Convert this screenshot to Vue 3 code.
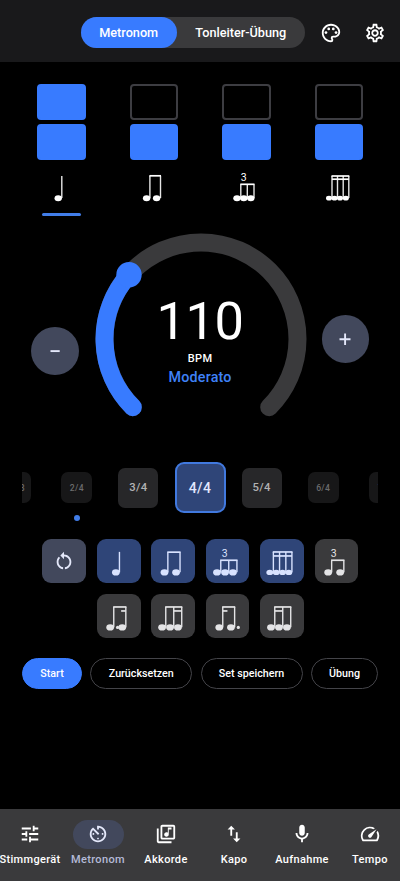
<script setup>
const note = (heads, stems, top, extra = {}) => ({ heads, stems, top, beams: [], ...extra })

const beats = [
  { levels: [true, true], current: true, note: note([19.2], [22.8], 6) },
  { levels: [false, true], note: note([14.6, 24.6], [17.9, 28.5], 5.8) },
  { levels: [false, true], note: note([13, 19.8, 26.8], [16.8, 23.3, 30], 14.3, { triplet: [19.8, 11.4] }) },
  { levels: [false, true], note: note([12, 17.5, 23, 28.8], [15, 20.5, 26.2, 31.8], 6, { beams: [[15, 31.8, 9.2]] }) },
]

const signatures = [
  { label: '12/8', size: 'small' },
  { label: '2/4', size: 'small', dot: true },
  { label: '3/4', size: 'medium' },
  { label: '4/4', size: 'large' },
  { label: '5/4', size: 'medium' },
  { label: '6/4', size: 'small' },
  { label: '7/4', size: 'small' },
]

const patterns = [
  { kind: 'reset' },
  { kind: 'active', note: note([18.9], [22.5], 12.9) },
  { kind: 'active', note: note([13.5, 25.1], [16.9, 29.1], 13.2) },
  { kind: 'active', note: note([11, 19.1, 27], [14.8, 22.8, 31], 21.3, { triplet: [18.8, 18.2] }) },
  { kind: 'active', note: note([9.8, 16.3, 22.6, 28.9], [13.4, 19.6, 25.9, 32], 13, { beams: [[13.4, 32, 17]] }) },
  { kind: 'plain', note: note([13.2, 25.2], [16.7, 28.9], 21.3, { triplet: [18.8, 18.2] }) },
  { kind: 'plain', note: note([13.2, 25.3], [16.8, 28.9], 13, { beams: [[24.2, 28.9, 17]], dot: 20.6 }) },
  { kind: 'plain', note: note([11.1, 19.1, 27], [14.8, 22.8, 30.8], 13, { beams: [[22.8, 30.8, 17]] }) },
  { kind: 'plain', note: note([13.3, 25], [16.8, 28.7], 13, { beams: [[16.8, 21.5, 17]], dot: 32.4 }) },
  { kind: 'plain', note: note([11, 19, 27], [14.8, 22.8, 30.8], 13, { beams: [[14.8, 22.8, 17]] }) },
]

const tabs = [
  { label: 'Stimmgerät', d: 'M3 17v2h6v-2H3zM3 5v2h10V5H3zm10 16v-2h8v-2h-8v-2h-2v6h2zM7 9v2H3v2h4v2h2V9H7zm14 4v-2H11v2h10zm-6-4h2V7h4V5h-4V3h-2v6z' },
  { label: 'Metronom', active: true, d: 'M11 17c0 .55.45 1 1 1s1-.45 1-1-.45-1-1-1-1 .45-1 1zm0-14v4h2V5.08c3.39.49 6 3.39 6 6.92 0 3.87-3.13 7-7 7s-7-3.13-7-7c0-1.68.59-3.22 1.58-4.42L12 13l1.41-1.41-6.8-6.8v.02C4.42 6.45 3 9.05 3 12c0 4.97 4.02 9 9 9 4.97 0 9-4.03 9-9s-4.03-9-9-9h-1zm7 9c0-.55-.45-1-1-1s-1 .45-1 1 .45 1 1 1 1-.45 1-1zM6 12c0 .55.45 1 1 1s1-.45 1-1-.45-1-1-1-1 .45-1 1z' },
  { label: 'Akkorde', d: 'M20 2H8c-1.1 0-2 .9-2 2v12c0 1.1.9 2 2 2h12c1.1 0 2-.9 2-2V4c0-1.1-.9-2-2-2zm0 14H8V4h12v12zm-7.5-1c1.38 0 2.5-1.12 2.5-2.5V7h3V5h-4v5.51c-.42-.32-.93-.51-1.5-.51-1.38 0-2.5 1.12-2.5 2.5s1.12 2.5 2.5 2.5zM4 6H2v14c0 1.1.9 2 2 2h14v-2H4V6z' },
  { label: 'Kapo', d: 'M16 17.01V10h-2v7.01h-3L15 21l4-3.99h-3zM9 3L5 6.99h3V14h2V6.99h3L9 3z' },
  { label: 'Aufnahme', d: 'M12 14c1.66 0 3-1.34 3-3V5c0-1.66-1.34-3-3-3S9 3.34 9 5v6c0 1.66 1.34 3 3 3zm5-3c0 2.76-2.24 5-5 5s-5-2.24-5-5H5c0 3.53 2.61 6.43 6 6.92V21h2v-3.08c3.39-.49 6-3.39 6-6.92h-2z' },
  { label: 'Tempo', d: 'M20.38 8.57l-1.23 1.85a8 8 0 0 1-.22 7.58H5.07A8 8 0 0 1 15.58 6.85l1.85-1.23A10 10 0 0 0 3.35 19a2 2 0 0 0 1.72 1h13.85a2 2 0 0 0 1.74-1 10 10 0 0 0-.27-10.44zM10.59 15.41a2 2 0 0 0 2.83 0l5.66-8.49-8.49 5.66a2 2 0 0 0 0 2.83z' },
]
</script>

<template>
  <div class="app">
    <header class="topbar">
      <div class="switch">
        <button class="seg seg-on">Metronom</button>
        <button class="seg">Tonleiter-Übung</button>
      </div>
      <svg class="icon palette" viewBox="0 0 24 24">
        <path d="M12 22C6.49 22 2 17.51 2 12S6.49 2 12 2s10 4.04 10 9c0 3.31-2.69 6-6 6h-1.77c-.28 0-.5.22-.5.5 0 .12.05.23.13.33.41.47.64 1.06.64 1.67A2.5 2.5 0 0 1 12 22zm0-18c-4.41 0-8 3.59-8 8s3.59 8 8 8c.28 0 .5-.22.5-.5a.54.54 0 0 0-.14-.35c-.41-.46-.63-1.05-.63-1.65a2.5 2.5 0 0 1 2.5-2.5H16c2.21 0 4-1.79 4-4 0-3.86-3.59-7-8-7z" />
        <circle cx="6.5" cy="11.5" r="1.5" /><circle cx="9.5" cy="7.5" r="1.5" />
        <circle cx="14.5" cy="7.5" r="1.5" /><circle cx="17.5" cy="11.5" r="1.5" />
      </svg>
      <svg class="icon" viewBox="0 0 24 24">
        <path d="M19.43 12.98c.04-.32.07-.64.07-.98 0-.34-.03-.66-.07-.98l2.11-1.65c.19-.15.24-.42.12-.64l-2-3.46c-.09-.16-.26-.25-.44-.25-.06 0-.12.01-.17.03l-2.49 1c-.52-.4-1.08-.73-1.69-.98l-.38-2.65C14.46 2.18 14.25 2 14 2h-4c-.25 0-.46.18-.49.42l-.38 2.65c-.61.25-1.17.59-1.69.98l-2.49-1c-.06-.02-.12-.03-.18-.03-.17 0-.34.09-.43.25l-2 3.46c-.13.22-.07.49.12.64l2.11 1.65c-.04.32-.07.65-.07.98 0 .33.03.66.07.98l-2.11 1.65c-.19.15-.24.42-.12.64l2 3.46c.09.16.26.25.44.25.06 0 .12-.01.17-.03l2.49-1c.52.4 1.08.73 1.69.98l.38 2.65c.03.24.24.42.49.42h4c.25 0 .46-.18.49-.42l.38-2.65c.61-.25 1.17-.59 1.69-.98l2.49 1c.06.02.12.03.18.03.17 0 .34-.09.43-.25l2-3.46c.12-.22.07-.49-.12-.64l-2.11-1.65zm-1.98-1.71c.04.31.05.52.05.73 0 .21-.02.43-.05.73l-.14 1.13.89.7 1.08.84-.7 1.21-1.27-.51-1.04-.42-.9.68c-.43.32-.84.56-1.25.73l-1.06.43-.16 1.13-.2 1.35h-1.4l-.19-1.35-.16-1.13-1.06-.43c-.43-.18-.83-.41-1.23-.71l-.91-.7-1.06.43-1.27.51-.7-1.21 1.08-.84.89-.7-.14-1.13c-.03-.31-.05-.54-.05-.74s.02-.43.05-.73l.14-1.13-.89-.7-1.08-.84.7-1.21 1.27.51 1.04.42.9-.68c.43-.32.84-.56 1.25-.73l1.06-.43.16-1.13.2-1.35h1.39l.19 1.35.16 1.13 1.06.43c.43.18.83.41 1.23.71l.91.7 1.06-.43 1.27-.51.7 1.21-1.07.85-.89.7.14 1.13zM12 8c-2.21 0-4 1.79-4 4s1.79 4 4 4 4-1.79 4-4-1.79-4-4-4zm0 6c-1.1 0-2-.9-2-2s.9-2 2-2 2 .9 2 2-.9 2-2 2z" />
      </svg>
    </header>

    <main class="main">
      <section class="beats">
        <div v-for="(b, i) in beats" :key="i" class="beat">
          <div v-for="(on, j) in b.levels" :key="j" class="level" :class="{ filled: on }"></div>
          <svg class="beat-note" viewBox="0 0 44 36">
            <path v-for="s in b.note.stems" :key="s" class="stem" :d="`M${s} ${b.note.top}V28`" />
            <path v-if="b.note.stems.length > 1" class="beam" :d="`M${b.note.stems[0] - 0.5} ${b.note.top}H${b.note.stems.at(-1) + 0.5}`" />
            <path v-for="(m, k) in b.note.beams" :key="'m' + k" class="beam" :d="`M${m[0]} ${m[2]}H${m[1]}`" />
            <ellipse v-for="h in b.note.heads" :key="'h' + h" :cx="h" cy="28.2" :rx="b.note.heads.length > 3 ? 3 : 3.7" :ry="b.note.heads.length > 3 ? 2.4 : 3" />
            <text v-if="b.note.triplet" :x="b.note.triplet[0]" :y="b.note.triplet[1]">3</text>
          </svg>
          <div class="marker" :class="{ shown: b.current }"></div>
        </div>
      </section>

      <section class="tempo">
        <button class="round minus" aria-label="minus">
          <svg viewBox="0 0 24 24"><path d="M7.5 12.1H16.7" /></svg>
        </button>
        <div class="dial">
          <svg class="arc" viewBox="0 0 212 186">
            <path class="track" d="M37.8 174.2A96.5 96.5 0 1 1 174.2 174.2" />
            <path class="value" d="M37.8 174.2A96.5 96.5 0 0 1 34 41.7" />
            <circle cx="34" cy="41.7" r="12.7" />
          </svg>
          <div class="readout">
            <div class="bpm">110</div>
            <div class="unit">BPM</div>
            <div class="name">Moderato</div>
          </div>
        </div>
        <button class="round plus" aria-label="plus">
          <svg viewBox="0 0 24 24"><path d="M6.5 12.2H17.5M12.1 6.4V18" /></svg>
        </button>
      </section>

      <section class="signatures">
        <div v-for="s in signatures" :key="s.label" class="cell">
          <div class="sig" :class="s.size">{{ s.label }}</div>
          <i v-if="s.dot" class="sig-dot"></i>
        </div>
      </section>

      <section class="patterns">
        <button v-for="(p, i) in patterns" :key="i" class="pattern" :class="p.kind">
          <svg v-if="p.kind === 'reset'" class="reset-icon" viewBox="0 0 24 24">
            <path d="M12 5V2L8 6l4 4V7c3.31 0 6 2.69 6 6 0 2.97-2.17 5.43-5 5.91v2.02c3.95-.49 7-3.85 7-7.93 0-4.42-3.58-8-8-8zM6 13c0-1.65.67-3.15 1.76-4.24L6.34 7.34C4.9 8.79 4 10.79 4 13c0 4.08 3.05 7.44 7 7.93v-2.02c-2.83-.48-5-2.94-5-5.91z" />
          </svg>
          <svg v-else class="pattern-note" viewBox="0 0 44 44">
            <path v-for="s in p.note.stems" :key="s" class="stem" :d="`M${s} ${p.note.top}V33.4`" />
            <path v-if="p.note.stems.length > 1" class="beam" :d="`M${p.note.stems[0] - 0.6} ${p.note.top}H${p.note.stems.at(-1) + 0.6}`" />
            <path v-for="(m, k) in p.note.beams" :key="'m' + k" class="beam" :d="`M${m[0]} ${m[2]}H${m[1]}`" />
            <ellipse v-for="h in p.note.heads" :key="'h' + h" :cx="h" cy="33.5" :rx="p.note.heads.length > 3 ? 3.4 : 3.9" :ry="p.note.heads.length > 3 ? 2.7 : 3.1" />
            <circle v-if="p.note.dot" :cx="p.note.dot" cy="33.5" r="1.6" />
            <text v-if="p.note.triplet" :x="p.note.triplet[0]" :y="p.note.triplet[1]">3</text>
          </svg>
        </button>
      </section>

      <section class="actions">
        <button class="act primary">Start</button>
        <button class="act wide">Zurücksetzen</button>
        <button class="act wide">Set speichern</button>
        <button class="act last">Übung</button>
      </section>
    </main>

    <nav class="tabs">
      <a v-for="t in tabs" :key="t.label" class="tab" :class="{ on: t.active }">
        <span class="tab-pill"><svg class="icon" viewBox="0 0 24 24"><path :d="t.d" /></svg></span>
        <span class="tab-label">{{ t.label }}</span>
      </a>
    </nav>
  </div>
</template>

<style>
body { background: #000; }
</style>

<style scoped>
* { box-sizing: border-box; }
.app {
  width: 400px; height: 881px; overflow: hidden;
  display: flex; flex-direction: column;
  background: #000; color: #fff;
  font-family: Roboto, "Noto Sans", sans-serif;
}
button { font: inherit; color: inherit; border: 0; padding: 0; background: none; }
svg { display: block; flex: none; }
.icon { width: 22px; height: 22px; fill: #fff; }

.topbar {
  height: 62px; flex: none; background: #19191b;
  display: flex; align-items: center; justify-content: flex-end;
  padding: 3px 14px 0 0;
}
.switch {
  display: flex; width: 224.3px; height: 31px; margin-right: 15px;
  border-radius: 16px; background: #3a3a3c;
}
.seg { flex: 1; font-size: 12.7px; font-weight: 500; border-radius: 16px; white-space: nowrap; }
.seg-on { flex: 0 0 96px; background: #387bff; }
.palette { margin-right: 22px; }

.main { flex: 1; padding-top: 21.7px; }
.beats { display: grid; grid-template-columns: repeat(4, 92.5px); justify-content: center; }
.beat { display: flex; flex-direction: column; align-items: center; }
.level {
  width: 48.5px; height: 36.3px; margin-bottom: 3.7px; border-radius: 4px;
  border: 2px solid #3d3d42;
}
.level.filled { background: #387bff; border-color: #387bff; }
.beat-note { width: 44px; height: 36px; margin-top: 6.3px; fill: #fff; stroke: none; }
.stem { stroke: #e6e6e6; stroke-width: 1.4; fill: none; }
.beam { stroke: #fff; stroke-width: 1.7; fill: none; }
text { font-size: 10.5px; text-anchor: middle; }
.marker { width: 39.5px; height: 3px; margin-top: 6.6px; border-radius: 2px; }
.marker.shown { background: #417de8; }

.tempo { display: flex; margin-top: 15.3px; padding-left: 31.2px; height: 188px; }
.round {
  width: 47.8px; height: 47.8px; flex: none; border-radius: 50%; background: #42485c;
  display: flex; align-items: center; justify-content: center;
}
.round svg { width: 24px; height: 24px; fill: none; stroke: #e4e8fa; stroke-width: 1.9; }
.minus { margin-top: 96.3px; }
.plus { margin: 84.3px 0 0 15px; }
.dial { width: 212px; margin-left: 15.6px; display: grid; }
.arc, .readout { grid-area: 1 / 1; }
.arc { width: 212px; height: 186px; margin-top: 2.2px; }
.track, .value { fill: none; stroke: #3a3a3c; stroke-width: 18; stroke-linecap: round; }
.value { stroke: #387bff; }
.arc circle { fill: #387bff; }
.readout { text-align: center; padding-top: 61.8px; width: 211px; }
.bpm { font-size: 52.4px; line-height: 56px; letter-spacing: -0.4px; }
.unit { font-size: 11px; line-height: 14px; font-weight: 500; margin-top: 3px; letter-spacing: 0.3px; }
.name { font-size: 14.3px; line-height: 18px; margin-top: 2px; font-weight: 500; color: #3f82f8; letter-spacing: 0.2px; }

.signatures {
  margin: 43.2px 22px 0; height: 62px; overflow: hidden;
  display: grid; grid-template-columns: repeat(7, 61.6px); justify-content: center;
}
.cell { display: flex; align-items: center; justify-content: center; height: 51px; position: relative; }
.sig { display: flex; align-items: center; justify-content: center; flex: none; border-radius: 7px; letter-spacing: 0.3px; }
.small { width: 31px; height: 31px; font-size: 8.6px; font-weight: 500; color: #6c6c6d; background: #171718; }
.medium { width: 40px; height: 40px; font-size: 11.3px; font-weight: 500; color: #b2b2b3; background: #272729; }
.large { width: 51px; height: 51px; font-size: 14px; font-weight: 500; color: #e2e8ff; background: #2f4578; border: 2px solid #4179df; border-radius: 9px; }
.sig-dot { position: absolute; left: 28px; top: 53.2px; width: 6px; height: 6px; border-radius: 50%; background: #417de8; }

.patterns { display: flex; flex-wrap: wrap; justify-content: center; gap: 10.8px 10.6px; margin-top: 15.2px; padding: 0 21.7px 0 22.3px; }
.pattern { width: 43.9px; height: 43.9px; border-radius: 9px; display: flex; align-items: center; justify-content: center; background: #3a3a3c; }
.pattern.active { background: #2f4578; }
.pattern.reset { background: #42485c; }
.reset-icon { width: 22px; height: 22px; fill: #e4e8fa; }
.pattern-note { width: 43.9px; height: 43.9px; fill: #e4e4e6; }
.pattern-note .stem, .pattern-note .beam { stroke: #e4e4e6; }
.pattern-note .stem { stroke-width: 1.4; }
.active .pattern-note { fill: #d8e2ff; }
.active .stem, .active .beam { stroke: #d8e2ff; }

.actions { display: flex; justify-content: space-between; margin: 20.6px 21.7px 0 22px; }
.act { height: 30.5px; border: 1px solid #444449; border-radius: 16px; font-size: 10.7px; font-weight: 500; width: 60px; white-space: nowrap; }
.wide { width: 102px; }
.last { width: 67.5px; }
.primary { background: #387bff; border-color: #387bff; }

.tabs { height: 72px; flex: none; background: #3a3a3c; display: grid; grid-template-columns: repeat(6, 60px); column-gap: 8px; padding-top: 10.5px; }
.tab { display: flex; flex-direction: column; align-items: center; }
.tab-pill { width: 51px; height: 29.5px; border-radius: 15px; display: flex; align-items: center; justify-content: center; }
.on .tab-pill { background: #42485c; }
.on .icon { fill: #e4e8fa; }
.tab-label { font-size: 11px; line-height: 14px; margin-top: 4px; font-weight: 500; letter-spacing: 0.35px; white-space: nowrap; }
.on .tab-label { color: #b5bbd8; }
</style>
